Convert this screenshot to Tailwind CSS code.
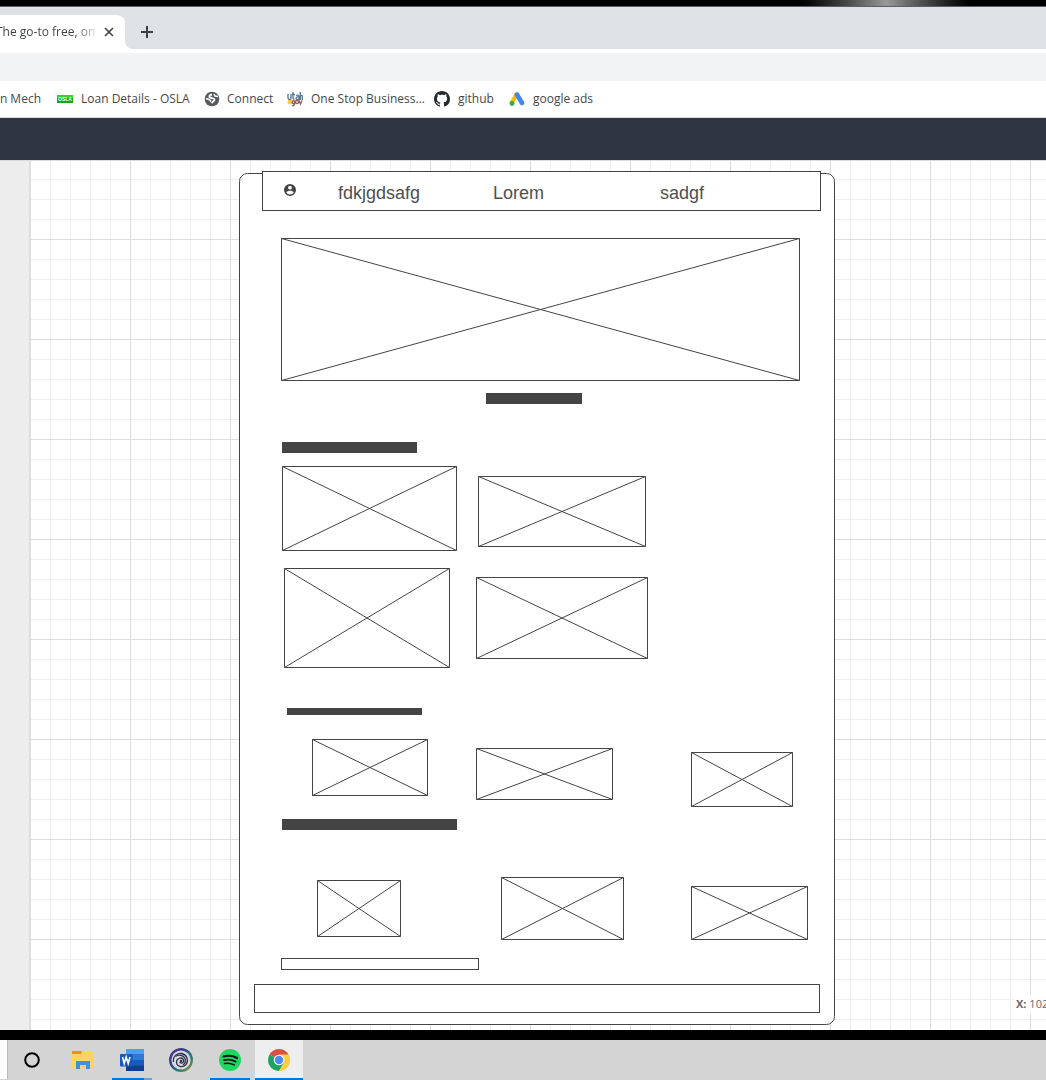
<!DOCTYPE html>
<html lang="en">
<head>
<meta charset="utf-8">
<title>Wireframe editor</title>
<script src="https://cdn.jsdelivr.net/npm/@tailwindcss/browser@4"></script>
</head>
<body class="flex h-screen flex-col overflow-hidden bg-black font-['Open_Sans',sans-serif] text-xs text-[#45484c]">

<div class="flex h-[7px] shrink-0 justify-end border-b border-[#625d60] bg-black">
  <div class="mr-16 h-full w-48 bg-linear-to-r from-black via-[#999] to-black"></div>
</div>

<header class="shrink-0">
  <div class="flex h-[42px] items-end bg-[#dee1e6]">
    <div class="flex h-[34px] w-[125px] items-center justify-between rounded-tr-lg bg-white pr-[11px]">
      <span class="-ml-1 bg-linear-to-r from-[#3c4043] from-80% to-[#ddd] bg-clip-text whitespace-nowrap text-transparent">The go-to free, on</span>
      <button aria-label="Close tab"><svg class="size-[10px]" viewBox="0 0 10 10" stroke="#3c4043" stroke-width="1.600"><path d="M1 1l8 8M9 1l-8 8"/></svg></button>
    </div>
    <svg class="size-2" viewBox="0 0 8 8"><path d="M0 0v8h8A8 8 0 0 1 0 0" fill="#fff"/></svg>
    <button aria-label="New tab" class="mb-[11px] ml-2"><svg class="size-3" viewBox="0 0 12 12" stroke="#3c4043" stroke-width="2"><path d="M6 0v12M0 6h12"/></svg></button>
  </div>
  <div class="h-8 border-t-4 border-white bg-[#f1f3f4]"></div>
  <nav class="flex h-[37px] items-center overflow-hidden whitespace-nowrap border-b border-[#d5dcd9] bg-white">
    <a href="#" class="flex w-[57px] justify-end pr-4">on Mech</a>
    <a href="#" class="flex w-[147px] items-center gap-2">
      <svg class="h-2 w-4" viewBox="0 0 16 8"><rect width="16" height="8" fill="#12a812"/><rect width="16" height="3" fill="#2fd62f"/><text x="8" y="6" font-size="5" font-weight="bold" text-anchor="middle" fill="#fff" font-family="Liberation Sans, sans-serif">OSLA</text></svg>
      Loan Details - OSLA</a>
    <a href="#" class="flex w-[83px] items-center gap-2">
      <svg class="-mr-px size-4" viewBox="0 0 16 16"><circle cx="8" cy="8" r="7.300" fill="#55585c"/><path d="M8 3.500c-2 .3-3 1.200-2.500 2.500.7 1.500 4.500.8 5 2.500.3 1.500-1.500 2-3 3.500" fill="none" stroke="#fff" stroke-width="1.900"/><path d="M2 7.500l3.500 1.200 1.500 1.800M10 3l1 2 3 .5" fill="none" stroke="#fff" stroke-width="1.500"/></svg>
      Connect</a>
    <a href="#" class="flex w-[147px] items-center gap-2">
      <svg class="size-4" viewBox="0 0 16 16"><circle cx="3" cy="11" r="2.500" fill="#f5cf4a"/><g fill="none" stroke-width="1.300"><path d="M1 3v4q0 1.500 1.500 1.500T4 7V3M6 1v6q0 1.500 1.500 1.500M5 3.500h3M9 4.500q3-1 3 1v3q-3 .5-3-1.200T12 6M13.300 1v8M13.300 5q2-1.500 2 .5V9" stroke="#4b7297"/><path d="M7.500 10a1.500 1.500 0 1 0 0 2.500M7.500 9.500v4q-1 2-2.500 1M10 9.500a1.600 1.600 0 1 0 .1 0M12 9.500l1.500 3.500 1.500-3.500" stroke="#85605c"/></g></svg>
      One Stop Business...</a>
    <a href="#" class="flex w-[75px] items-center gap-2">
      <svg class="size-4" viewBox="0 0 16 16"><path fill="#24292e" d="M8 0C3.580 0 0 3.580 0 8c0 3.540 2.290 6.530 5.470 7.590.4.070.55-.17.55-.38 0-.19-.01-.82-.01-1.490-2.010.37-2.530-.49-2.690-.94-.09-.23-.48-.94-.82-1.130-.28-.15-.68-.52-.01-.53.63-.01 1.080.58 1.230.82.720 1.210 1.870.87 2.330.66.070-.52.280-.87.510-1.070-1.780-.2-3.640-.89-3.640-3.950 0-.87.310-1.590.82-2.150-.08-.2-.36-1.020.08-2.120 0 0 .67-.21 2.200.82.640-.18 1.320-.27 2-.27s1.360.09 2 .27c1.530-1.040 2.200-.82 2.200-.82.440 1.100.160 1.920.080 2.120.510.560.820 1.270.820 2.150 0 3.070-1.870 3.750-3.650 3.950.290.250.540.730.540 1.480 0 1.070-.01 1.930-.01 2.200 0 .210.150.460.550.380A8 8 0 0 0 16 8c0-4.420-3.580-8-8-8z"/></svg>
      github</a>
    <a href="#" class="flex items-center gap-2">
      <svg class="size-4" viewBox="0 0 16 16" stroke-linecap="round" stroke-width="4.500"><path d="M7.500 3.500L3 11.500" stroke="#fbbc04"/><path d="M8 3.500l5 8.500" stroke="#4285f4"/><circle cx="3" cy="12.500" r="2.400" fill="#34a853"/></svg>
      google ads</a>
  </nav>
  <div class="h-[42px] bg-[#2f3542]"></div>
</header>

<main class="flex min-h-0 flex-1 border-t border-[#d9dbdd] bg-white">
  <aside class="w-[30px] shrink-0 border-r border-[#dedede] bg-[#ededed]"></aside>
  <!-- free canvas: 20px grid, heavier line every 100px -->
  <div class="relative flex-1 overflow-hidden bg-[linear-gradient(90deg,#ddd_1px,transparent_1px),linear-gradient(#ddd_1px,transparent_1px),linear-gradient(90deg,#eee_1px,transparent_1px),linear-gradient(#eee_1px,transparent_1px)] bg-[size:100px_100px,100px_100px,20px_20px,20px_20px] bg-[position:100px_78px,100px_78px,0_18px,0_18px]">
    <svg class="absolute top-0 left-0 h-[869px] w-[1016px]" viewBox="30 161 1016 869" fill="#fff" stroke="#444" stroke-width="1">
      <rect x="239.500" y="173.500" width="595" height="851" rx="8"/>
      <rect x="262.500" y="171.500" width="558" height="39"/>
      <path transform="translate(283 183)" stroke="none" fill="#444" fill-rule="evenodd" d="M7 1a6 6 0 1 0 0 12A6 6 0 0 0 7 1zM7 2.800a1.900 1.900 0 1 1 0 3.800 1.900 1.900 0 0 1 0-3.800zM7 11.500c-1.600 0-2.900-.8-3.700-2C3.400 8.300 5.800 7.700 7 7.700s3.600.6 3.700 1.800c-.8 1.200-2.100 2-3.700 2z"/>
      <g stroke="none" fill="#505050" font-size="18" font-family="Liberation Sans, sans-serif">
        <text x="338" y="199">fdkjgdsafg</text>
        <text x="493" y="199">Lorem</text>
        <text x="660" y="199">sadgf</text>
      </g>
      <g>
        <path d="M281.500 238.500h518v142h-518zl518 142m0-142l-518 142"/>
        <path d="M282.500 466.500h174v84h-174zl174 84m0-84l-174 84"/>
        <path d="M478.500 476.500h167v70h-167zl167 70m0-70l-167 70"/>
        <path d="M284.500 568.500h165v99h-165zl165 99m0-99l-165 99"/>
        <path d="M476.500 577.500h171v81h-171zl171 81m0-81l-171 81"/>
        <path d="M312.500 739.500h115v56h-115zl115 56m0-56l-115 56"/>
        <path d="M476.500 748.500h136v51h-136zl136 51m0-51l-136 51"/>
        <path d="M691.500 752.500h101v54h-101zl101 54m0-54l-101 54"/>
        <path d="M317.500 880.500h83v56h-83zl83 56m0-56l-83 56"/>
        <path d="M501.500 877.500h122v62h-122zl122 62m0-62l-122 62"/>
        <path d="M691.500 886.500h116v53h-116zl116 53m0-53l-116 53"/>
        <rect x="281.500" y="958.500" width="197" height="11"/>
        <rect x="254.500" y="984.500" width="565" height="28"/>
      </g>
      <g stroke="none" fill="#444">
        <rect x="486" y="393" width="96" height="11"/>
        <rect x="282" y="442" width="135" height="11"/>
        <rect x="287" y="708" width="135" height="7"/>
        <rect x="282" y="819" width="175" height="11"/>
      </g>
    </svg>
    <div class="absolute right-0 bottom-4 w-8 bg-white/80 pl-[2px] text-[11px] leading-5 whitespace-nowrap text-[#666]"><b>X:</b> 102</div>
  </div>
</main>

<footer class="flex h-[50px] shrink-0 border-t-10 border-black bg-[#d4d4d4]">
  <div class="h-[39px] w-2 border-r border-[#bbb] bg-white"></div>
  <button aria-label="Cortana" class="flex w-12 items-center justify-center"><svg class="size-4" viewBox="0 0 16 16"><circle cx="8" cy="8" r="6.800" fill="none" stroke="#000" stroke-width="2"/></svg></button>
  <button aria-label="File Explorer" class="flex w-[54px] items-center justify-center"><svg class="h-[18px] w-[22px]" viewBox="0 0 22 18"><path d="M0 0h9l1 1v3H0z" fill="#dc9a0c"/><path d="M0 3h9l1-2h11v16.500H0z" fill="#fdd365"/><path d="M4 10h14v8h-4v-4H8v4H4z" fill="#3895da"/></svg></button>
  <button aria-label="Word" class="relative mr-2 flex w-11 items-center justify-center"><svg class="h-[22px] w-6" viewBox="0 0 24 22"><path d="M6 0h18v22H6z" fill="#103f91"/><path d="M6 0h18v5.500H6z" fill="#41a5ee"/><path d="M6 5.500h18V11H6z" fill="#2b7cd3"/><path d="M6 11h18v5.500H6z" fill="#185abd"/><rect y="5" width="12.500" height="12.500" rx="1" fill="#1859bb"/><path d="M2.500 8l1.700 6.500L6.200 8l2 6.500L10 8" fill="none" stroke="#fff" stroke-width="1.600"/></svg><span class="absolute bottom-0 left-[2px] h-[2px] w-10 border-r-8 border-[#68a5dd] bg-[#0078d7]"></span></button>
  <button aria-label="Ubisoft Connect" class="mr-1 flex w-[38px] items-center justify-center"><svg class="size-6" viewBox="0 0 24 24" fill="none"><defs><linearGradient id="ring" x2="1" y2="1"><stop stop-color="#6b2a8f"/><stop offset=".35" stop-color="#2f3f8f"/><stop offset=".65" stop-color="#277e6e"/><stop offset="1" stop-color="#b58a28"/></linearGradient></defs><circle cx="12" cy="12" r="12" fill="url(#ring)"/><circle cx="12" cy="12" r="9.600" fill="#d9dbe2"/><g stroke="#32334d" stroke-width="1.300"><path d="M4.500 14C3.500 8 8.500 4.500 13 5.500c5 1.200 7 7 4 11-3 3.500-9 2.500-9.500-2C7.200 10 13 8.500 14.500 12c.8 3-2.800 4-4 2"/><path d="M6.500 8.500c3-2.500 8-1.500 9.500 2 1 3 0 5-2 6.500"/></g><circle cx="12" cy="13" r="1.300" fill="#32334d"/></svg></button>
  <button aria-label="Spotify" class="mx-[6px] flex w-10 items-center justify-center border-b-2 border-[#0078d7] pt-[2px]"><svg class="size-[22px]" viewBox="0 0 22 22" fill="none" stroke="#191414" stroke-linecap="round"><circle cx="11" cy="11" r="11" fill="#1ed760" stroke="none"/><path d="M4.500 7.500c4.500-1.300 9.500-.8 13.500 1.500" stroke-width="2.200"/><path d="M5 11.200c4-1.100 8-.6 11.700 1.400" stroke-width="1.800"/><path d="M5.500 14.600c3.500-.8 6.700-.4 9.800 1.300" stroke-width="1.500"/></svg></button>
  <button aria-label="Chrome" class="-ml-px flex w-12 items-center justify-center border-b-2 border-[#0078d7] bg-[#eee] pt-[2px]"><svg class="size-[22px]" viewBox="0 0 22 22"><path d="M11 11L1.500 5.500A11 11 0 0 1 20.500 5.500z" fill="#dd4f43"/><path d="M11 11l9.500-5.500A11 11 0 0 1 11 22z" fill="#ffcd45"/><path d="M1.500 5.500A11 11 0 0 0 11 22l4.800-8.200L11 11z" fill="#1da261"/><path d="M11 5.500h9.500A11 11 0 0 1 11 22l5-8.500z" fill="#ffcd45"/><circle cx="11" cy="11" r="5.300" fill="#fff"/><circle cx="11" cy="11" r="4.200" fill="#4a8bf5"/></svg></button>
</footer>
</body>
</html>
